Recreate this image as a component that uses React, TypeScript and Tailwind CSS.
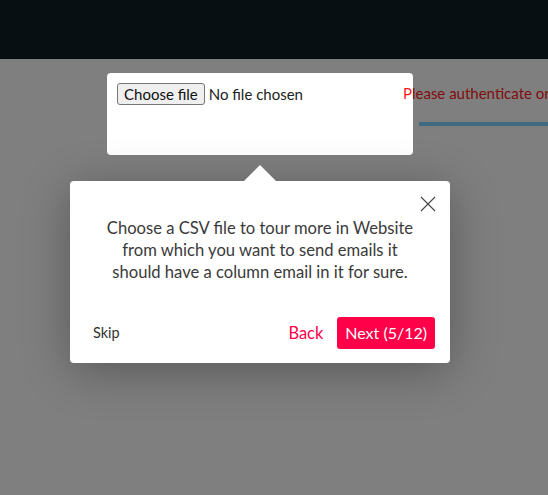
import React from "react";

export default function App() {
  return (
    <div
      className="relative w-[548px] h-[495px] overflow-hidden bg-white"
      style={{ fontFamily: "Lato, 'Noto Sans', sans-serif" }}
    >
      <div className="relative z-20 h-[59px] bg-[#080f13]" />
      <div className="flex items-start pt-[24px] pl-[117px]">
        <label className="flex shrink-0 items-center gap-[4px] w-[286px] whitespace-nowrap text-[15px] text-[#222]">
          <span className="h-[22px] px-[6px] flex items-center rounded-[3px] border border-[#767676] bg-[#efefef] text-[#111]">
            Choose file
          </span>
          <span>No file chosen</span>
        </label>
        <div className="flex shrink-0 flex-col gap-[19px]">
          <div className="whitespace-nowrap text-[15px] leading-[20px] text-[#ff1a1a]">
            Please authenticate or connect your account
          </div>
          <div className="ml-[16px] h-[4px] w-[200px] bg-[#7cd6ff]" />
        </div>
      </div>

      {/* spotlight overlay */}
      <div className="absolute left-[107px] top-[73px] w-[306px] h-[82px] rounded-[4px] shadow-[0_0_0_9999px_rgba(0,0,0,0.5)] z-10 pointer-events-none" />

      {/* tooltip */}
      <div className="absolute z-30 left-[70px] top-[181px] w-[380px] h-[182px] rounded-[4px] bg-white p-[15px] shadow-[0_0.5em_3em_rgba(0,0,0,0.3)]">
        <div className="absolute -top-[16px] left-[174px] w-0 h-0 border-l-[16px] border-r-[16px] border-b-[16px] border-l-transparent border-r-transparent border-b-white" />
        <svg
          className="absolute top-[15px] right-[14px]"
          width="16"
          height="16"
          viewBox="0 0 16 16"
        >
          <path d="M1 1 L15 15 M15 1 L1 15" stroke="#444" strokeWidth="1.1" fill="none" />
        </svg>
        <p className="pt-[21px] text-center text-[16.6px] leading-[22px] text-[#3a3a3a]">
          Choose a CSV file to tour more in Website
          <br />
          from which you want to send emails it
          <br />
          should have a column email in it for sure.
        </p>
        <div className="mt-[34px] flex items-center h-[32px]">
          <button className="px-[8px] text-[14.5px] text-[#333]">Skip</button>
          <div className="ml-auto flex items-center gap-[6px]">
            <button className="px-[8px] text-[16.4px] text-[#ff0049]">Back</button>
            <button className="h-[32px] px-[8px] rounded-[3px] bg-[#ff0049] text-[16px] text-white">
              Next (5/12)
            </button>
          </div>
        </div>
      </div>
    </div>
  );
}
